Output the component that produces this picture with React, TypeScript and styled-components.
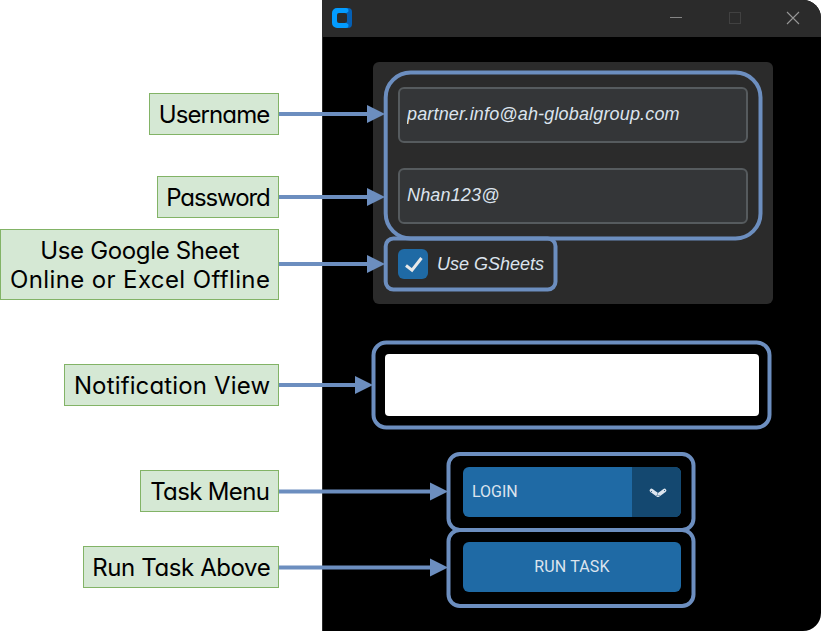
import React from 'react';
import styled, { createGlobalStyle } from 'styled-components';

const GlobalStyle = createGlobalStyle`
  * { box-sizing: border-box; }
  body { margin: 0; background: #fff; overflow: hidden; }
`;

const Page = styled.div`
  position: relative;
  display: flex;
  width: 821px;
  height: 631px;
  background: #fff;
`;

const LabelColumn = styled.aside`
  display: flex;
  flex-direction: column;
  align-items: flex-end;
  width: 279px;
  margin-right: 43px;
  padding-top: 93px;
`;

const Label = styled.div<{ $width: number; $gap?: number; $tall?: boolean }>`
  display: flex;
  flex-direction: column;
  align-items: center;
  justify-content: center;
  flex: none;
  width: ${(p) => p.$width}px;
  height: ${(p) => (p.$tall ? 71 : 42)}px;
  margin-top: ${(p) => p.$gap ?? 0}px;
  padding: 1px 0 0 1px;
  border: 1px solid #82b366;
  background: #d5e8d4;
  color: #000;
  font: 24px/29px 'Comic Sans MS', Inter, 'Open Sans', sans-serif;
  font-feature-settings: 'cv11' 1, 'calt' 0;
  white-space: nowrap;
`;

const Line = styled.span<{ $spacing: number }>`
  letter-spacing: ${(p) => p.$spacing}px;
  margin-right: ${(p) => -p.$spacing}px;
`;

const AppWindow = styled.main`
  display: flex;
  flex-direction: column;
  width: 499px;
  height: 631px;
  border-left: 1px solid #2b2b2b;
  border-radius: 0 18px 18px 0;
  background: #000;
  overflow: hidden;
`;

const TitleBar = styled.header`
  display: flex;
  align-items: center;
  justify-content: space-between;
  flex: none;
  height: 37px;
  padding: 0 21px 1px 9px;
  background: #2b2b2b;
`;

const WindowControls = styled.div`
  display: flex;
  gap: 44.5px;
  svg { display: block; }
`;

const Content = styled.div`
  display: flex;
  flex-direction: column;
  align-items: center;
  padding: 25px 0 0 2px;
`;

const Card = styled.section`
  display: flex;
  flex-direction: column;
  align-items: flex-start;
  width: 400px;
  height: 242px;
  padding: 25px;
  border-radius: 6px;
  background: #2b2b2b;
`;

const Field = styled.input`
  width: 350px;
  height: 56px;
  margin: 0 0 25px;
  padding: 0 7px 2px;
  border: 2px solid #565b5e;
  border-radius: 6px;
  outline: none;
  background: #343638;
  color: #dce4ee;
  font: italic 18px 'Liberation Sans', Arial, sans-serif;
  letter-spacing: 0.16px;
`;

const CheckRow = styled.label`
  display: flex;
  align-items: center;
  gap: 9px;
  color: #dce4ee;
  font: italic 18px 'Liberation Sans', Arial, sans-serif;
`;

const CheckBox = styled.span`
  display: flex;
  width: 30px;
  height: 30px;
  border-radius: 6px;
  background: #1f6aa5;
`;

const NotificationView = styled.div`
  width: 374px;
  height: 62px;
  margin: 50px 2px 51px 0;
  border-radius: 4px;
  background: #fff;
`;

const TaskMenu = styled.div`
  display: flex;
  width: 218px;
  height: 50px;
  margin-right: 2px;
  border-radius: 6px;
  background: #1f6aa5;
  overflow: hidden;
`;

const TaskValue = styled.span`
  flex: 1;
  padding-left: 9px;
  color: #dce4ee;
  font: 16px/49px Roboto, sans-serif;
`;

const MenuArrow = styled.span`
  display: flex;
  align-items: center;
  justify-content: center;
  width: 49px;
  padding: 2px 0 0 2px;
  background: #144870;
`;

const RunButton = styled.button`
  width: 218px;
  height: 50px;
  margin: 25px 2px 0 0;
  padding: 0 0 1px;
  border: 0;
  border-radius: 6px;
  background: #1f6aa5;
  color: #dce4ee;
  font: 16px Roboto, sans-serif;
  letter-spacing: 0.15px;
`;

const Callouts = styled.svg`
  position: absolute;
  inset: 0;
  pointer-events: none;
`;

const outlines = [
  { x: 385.7, y: 72.5, w: 374.8, h: 166, r: 25 },
  { x: 385.7, y: 238.5, w: 169.8, h: 51, r: 7.7 },
  { x: 373.5, y: 342.5, w: 396, h: 85, r: 12.8 },
  { x: 448.5, y: 454, w: 245, h: 76, r: 11.4 },
  { x: 448.5, y: 530, w: 245, h: 76, r: 11.4 },
];

const arrows = [
  { y: 114, tip: 385 },
  { y: 197, tip: 385 },
  { y: 264, tip: 385 },
  { y: 385, tip: 373 },
  { y: 491.5, tip: 448 },
  { y: 567.5, tip: 448 },
];

export default function App() {
  return (
    <>
      <GlobalStyle />
      <Page>
        <LabelColumn>
          <Label $width={130}><Line $spacing={-0.9}>Username</Line></Label>
          <Label $width={122} $gap={41}><Line $spacing={-1.1}>Password</Line></Label>
          <Label $width={279} $gap={11} $tall>
            <Line $spacing={-0.35}>Use Google Sheet</Line>
            <Line $spacing={0.38}>Online or Excel Offline</Line>
          </Label>
          <Label $width={215} $gap={64}><Line $spacing={0.15}>Notification View</Line></Label>
          <Label $width={139} $gap={64}><Line $spacing={-0.65}>Task Menu</Line></Label>
          <Label $width={196} $gap={34}><Line $spacing={-0.4}>Run Task Above</Line></Label>
        </LabelColumn>

        <AppWindow>
          <TitleBar>
            <svg width="20" height="20" viewBox="0 0 20 20">
              <path d="M14 0h2a4 4 0 0 1 4 4v12a4 4 0 0 1-4 4h-2z" fill="#0560b5" />
              <path d="M5 0h9a2.500 2.500 0 0 1 0 5v10a2.500 2.500 0 0 1 0 5H5a5 5 0 0 1-5-5V5a5 5 0 0 1 5-5z" fill="#039cff" />
              <rect x="5" y="5" width="10" height="10" rx="2" fill="#2b2b2b" />
              <path d="M15 4.500h1v11h-1z" fill="#0560b5" />
            </svg>
            <WindowControls>
              <svg width="14" height="14"><path d="M1 6.500h12" stroke="#858585" /></svg>
              <svg width="14" height="14"><rect x="1.500" y="1.500" width="11" height="11" fill="none" stroke="#414141" /></svg>
              <svg width="14" height="14"><path d="M1 1l12 12M13 1L1 13" stroke="#969696" strokeWidth="1.1" /></svg>
            </WindowControls>
          </TitleBar>
          <Content>
            <Card>
              <Field readOnly value="partner.info@ah-globalgroup.com" />
              <Field readOnly value="Nhan123@" />
              <CheckRow>
                <CheckBox>
                  <svg width="30" height="30">
                    <path d="M8 16.500l6 4.700L23.500 9" fill="none" stroke="#e8e8e8" strokeWidth="3" />
                  </svg>
                </CheckBox>
                Use GSheets
              </CheckRow>
            </Card>
            <NotificationView />
            <TaskMenu>
              <TaskValue>LOGIN</TaskValue>
              <MenuArrow>
                <svg width="18" height="10" viewBox="0 0 18 10">
                  <path d="M2.500 2.500L9 7.200l6.500-4.700" fill="none" stroke="#dce4ee" strokeWidth="3.600" strokeLinecap="round" strokeLinejoin="round" />
                  <path d="M2 3.500h1M15 2.500h1M8.500 5.500v1M7.500 7.500h1M9.500 7.500h1" stroke="#144870" strokeWidth="0.8" />
                </svg>
              </MenuArrow>
            </TaskMenu>
            <RunButton>RUN TASK</RunButton>
          </Content>
        </AppWindow>

        <Callouts width="821" height="631">
          {outlines.map((o) => (
            <rect key={`${o.x}-${o.y}`} x={o.x} y={o.y} width={o.w} height={o.h} rx={o.r} fill="none" stroke="#6c8ebf" strokeWidth="4" />
          ))}
          {arrows.map((a) => (
            <g key={a.y} fill="#6c8ebf">
              <rect x="279" y={a.y - 2} width={a.tip - 17 - 279} height="4" />
              <path d={`M${a.tip} ${a.y}l-18 -9v18z`} />
            </g>
          ))}
        </Callouts>
      </Page>
    </>
  );
}
